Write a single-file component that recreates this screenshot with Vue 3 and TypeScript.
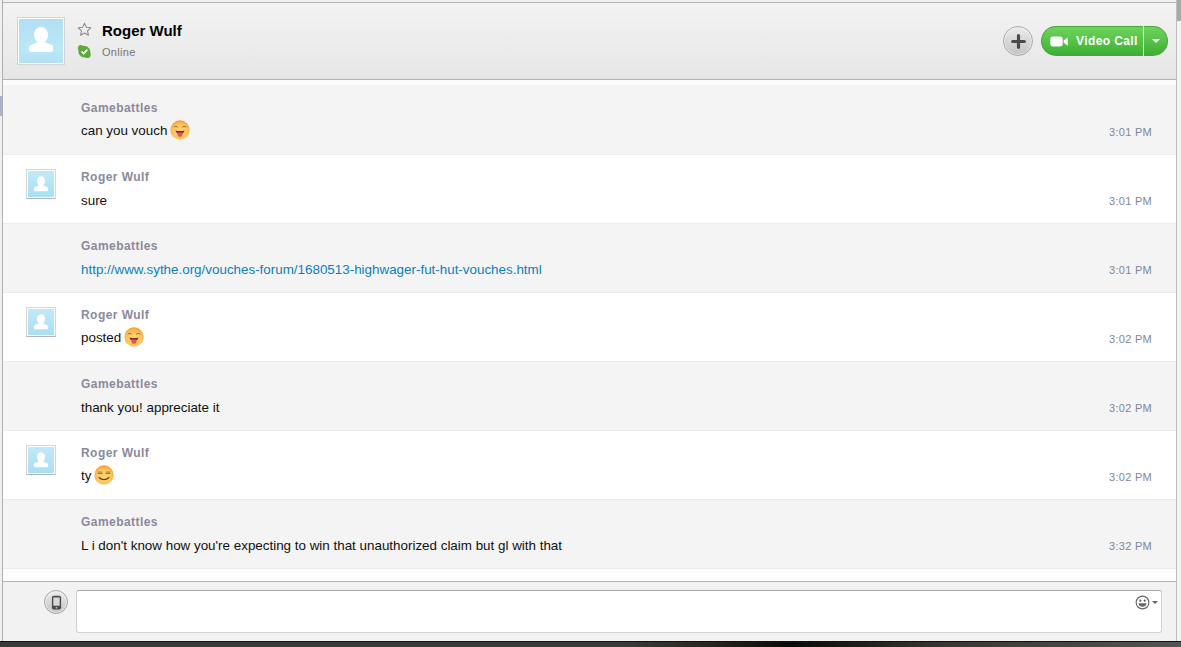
<script setup lang="ts">
interface Row {
  id: number
  name: string
  text: string
  time: string
  self: boolean
  link?: boolean
  emoji?: 'tongue' | 'smile'
}
const rows: Row[] = [
  { id: 1, name: 'Gamebattles', text: 'can you vouch', time: '3:01 PM', self: false, emoji: 'tongue' },
  { id: 2, name: 'Roger Wulf', text: 'sure', time: '3:01 PM', self: true },
  { id: 3, name: 'Gamebattles', text: 'http://www.sythe.org/vouches-forum/1680513-highwager-fut-hut-vouches.html', time: '3:01 PM', self: false, link: true },
  { id: 4, name: 'Roger Wulf', text: 'posted', time: '3:02 PM', self: true, emoji: 'tongue' },
  { id: 5, name: 'Gamebattles', text: 'thank you! appreciate it', time: '3:02 PM', self: false },
  { id: 6, name: 'Roger Wulf', text: 'ty', time: '3:02 PM', self: true, emoji: 'smile' },
  { id: 7, name: 'Gamebattles', text: "L i don't know how you're expecting to win that unauthorized claim but gl with that", time: '3:32 PM', self: false }
]
</script>

<template>
  <div class="screen">
    <div class="upper">
      <div class="side-left"><div class="tab"></div></div>
      <main class="win">
        <header class="head">
          <div class="big-avatar">
            <svg viewBox="0 0 44 44" width="44" height="44"><ellipse cx="22" cy="16" rx="7" ry="8" fill="#fff"/><path d="M18.500 22.500h7c1 2 6.500 2.500 8.500 4.500.5 1.500.5 4-.3 5.300-.2.400-.6.700-1.200.7H12c-.6 0-1-.3-1.200-.7-.8-1.300-.8-3.800-.3-5.300 2-2 7-2.500 8-4.500z" fill="#fff"/></svg>
          </div>
          <div class="state-icons">
            <svg viewBox="0 0 16 16" width="15" height="15"><path d="M8 1.300l2 4.400 4.700.5-3.500 3.200 1 4.700L8 11.700l-4.200 2.400 1-4.700L1.300 6.200 6 5.700z" fill="none" stroke="#8a8a8a" stroke-width="1.100" stroke-linejoin="round"/></svg>
            <svg viewBox="0 0 16 16" width="15" height="15"><path d="M3.800 1c1 0 1.700.5 2.400.8C10.800 1.400 14.400 4.700 14.200 8.500c0 .7 0 1 .3 1.500.7 2.400-.8 5-3.700 5-1 0-1.700-.4-2.500-.6C4 14.400 1.200 11 1.500 7.200c0-.6-.5-1.200-.5-2.600C1 2.500 2.100 1 3.800 1z" fill="#5fa83b"/><path d="M4.800 8l2.300 2.200L11 6" fill="none" stroke="#fff" stroke-width="1.800"/></svg>
          </div>
          <div class="who">
            <div class="who-name">Roger Wulf</div>
            <div class="who-status">Online</div>
          </div>
          <div class="spacer"></div>
          <button class="round plus" aria-label="Add">
            <svg viewBox="0 0 16 16" width="15" height="15"><path d="M8 1.800v12.400M1.800 8h12.400" stroke="#4a4a4a" stroke-width="3.400" stroke-linecap="round"/></svg>
          </button>
          <div class="call">
            <button class="call-main">
              <svg viewBox="0 0 20 12" width="19" height="11"><rect x="0" y="0.500" width="13.500" height="11" rx="3" fill="#fff"/><path d="M14.500 5l4.500-3.500v9L14.500 7z" fill="#fff"/></svg>
              <span>Video Call</span>
            </button>
            <button class="call-more" aria-label="More"><i></i></button>
          </div>
        </header>

        <section class="log">
          <article v-for="r in rows" :key="r.id" class="row" :class="{ odd: !r.self }">
            <div class="row-av">
              <div v-if="r.self" class="small-avatar">
                <svg viewBox="0 0 26 26" width="26" height="26"><ellipse cx="13" cy="10" rx="4" ry="4.800" fill="#fff"/><path d="M11 14h4c.6 1.200 3.800 1.500 5 2.700.3.900.3 2.400-.2 3.100-.1.200-.3.400-.7.400H6.900c-.4 0-.6-.2-.7-.4-.5-.7-.5-2.200-.2-3.100 1.200-1.200 4.400-1.500 5-2.700z" fill="#fff"/></svg>
              </div>
            </div>
            <div class="row-body">
              <div class="row-name">{{ r.name }}</div>
              <div class="row-text" :class="{ 'with-emoji': r.emoji }">
                <a v-if="r.link" class="link">{{ r.text }}</a>
                <span v-else>{{ r.text }}</span>
                <svg v-if="r.emoji" class="emoji" viewBox="0 0 20 20" width="20" height="20">
                  <defs>
                    <radialGradient :id="'g' + r.id" cx="50%" cy="60%" r="60%">
                      <stop offset="0" stop-color="#ffd77c"/>
                      <stop offset="0.700" stop-color="#fdc05a"/>
                      <stop offset="1" stop-color="#f59a30"/>
                    </radialGradient>
                  </defs>
                  <circle cx="10" cy="10" r="9.700" :fill="'url(#g' + r.id + ')'"/>
                  <template v-if="r.emoji === 'tongue'">
                    <path d="M3.800 7.300c1-1.200 2.800-1.200 3.800 0M12.400 7.300c1-1.200 2.800-1.200 3.800 0" fill="none" stroke="#7a5424" stroke-width=".9"/>
                    <path d="M5.500 10.500c3 .8 6 .8 9 0-.3 1.600-1.300 2.700-2.500 3.100h-4C6.800 13.200 5.800 12.100 5.500 10.500z" fill="#7a2e22"/>
                    <path d="M7.400 12.500h5.200l-.3 3c-.4 1.700-4.200 1.700-4.600 0z" fill="#e8505c"/>
                  </template>
                  <template v-else>
                    <path d="M3.800 8.200h4.500M11.700 8.200h4.500" stroke="#7a5424" stroke-width="1"/>
                    <path d="M3.800 6.800h4.400M11.800 6.800h4.400" stroke="#b08440" stroke-width=".6"/>
                    <path d="M5 12.500c3 2.600 7 2.600 10 0" fill="none" stroke="#5e3f17" stroke-width="1.100" stroke-linecap="round"/>
                  </template>
                </svg>
              </div>
            </div>
            <time class="row-time">{{ r.time }}</time>
          </article>
        </section>

        <footer class="foot">
          <button class="round phone" aria-label="Phone">
            <svg viewBox="0 0 12 16" width="11" height="15"><rect x="1" y="0.500" width="10" height="15" rx="2" fill="#4a4a4a"/><rect x="2.500" y="2.500" width="7" height="9" fill="#d8d8d8"/><circle cx="6" cy="13.500" r="1" fill="#bbb"/></svg>
          </button>
          <div class="input">
            <div class="input-emoji">
              <svg viewBox="0 0 16 16" width="15" height="15"><circle cx="8" cy="8" r="6.800" fill="none" stroke="#666" stroke-width="1.200"/><circle cx="5.700" cy="6" r="1.100" fill="#555"/><circle cx="10.300" cy="6" r="1.100" fill="#555"/><path d="M3.700 8.800h8.600c-.3 2.500-2 3.800-4.300 3.800S4 11.300 3.700 8.800z" fill="#666"/></svg>
              <i></i>
            </div>
          </div>
        </footer>
      </main>
      <div class="side-right"><div class="corner"></div></div>
    </div>
    <div class="desk"></div>
  </div>
</template>

<style scoped>
.screen {
  width: 1181px;
  height: 647px;
  display: flex;
  flex-direction: column;
  overflow: hidden;
  font-family: "Liberation Sans", Arial, sans-serif;
  background: #f0f0f0;
}
.upper { flex: 1; display: flex; min-height: 0; padding-top: 2px; }
.side-left { width: 3px; margin-top: -2px; box-sizing: border-box; background: #f0f0f0; border-right: 1px solid #b0b0b0; position: relative; }
.tab { position: absolute; left: 0; top: 96px; width: 2px; height: 20px; background: #a9b3cc; }
.side-right { width: 5px; margin-top: -2px; box-sizing: border-box; background: #f4f4f4; border-left: 1px solid #bdbdbd; }
.corner { height: 21px; background: #a8a8a8; }
.win { flex: 1; min-width: 0; display: flex; flex-direction: column; background: #fff; border-top: 1px solid #b4b4b4; }

.head {
  height: 77px;
  box-sizing: border-box;
  flex: none;
  display: flex;
  align-items: flex-start;
  background: linear-gradient(#f3f3f3, #e6e6e6);
  border-bottom: 1px solid #b5b5b5;
}
.big-avatar {
  margin: 14px 0 0 14px;
  width: 46px;
  height: 46px;
  box-sizing: content-box;
  border: 1px solid #d4d4d4;
  outline: 1px solid #fff;
  outline-offset: -2px;
  background: linear-gradient(#b0e0f3, #bce7f6 70%, #aee0f3);
  display: flex;
  align-items: center;
  justify-content: center;
}
.state-icons { margin: 19px 0 0 12px; display: flex; flex-direction: column; gap: 7px; width: 25px; }
.who { margin-top: 19px; }
.who-name { font-size: 15px; font-weight: 700; line-height: 18px; color: #000; }
.who-status { font-size: 11px; line-height: 14px; margin-top: 5px; color: #777; letter-spacing: .3px; }
.spacer { flex: 1; }
.round {
  border-radius: 50%;
  border: 1px solid #a9a9a9;
  background: linear-gradient(#ececec, #c4c4c4);
  padding: 0;
  display: flex;
  align-items: center;
  justify-content: center;
  box-shadow: inset 0 0 0 1px rgba(255,255,255,.5);
}
.plus { width: 30px; height: 30px; margin: 23px 8px 0 0; }
.call { margin: 23px 8px 0 0; display: flex; height: 30px; }
.call button { border: 1px solid #4aa53a; background: linear-gradient(#6fd35c, #3cb033); color: #fff; padding: 0; height: 30px; display: flex; align-items: center; }
.call-main {
  width: 102px;
  border-radius: 15px 0 0 15px;
  padding-left: 8px !important;
  gap: 7px;
  font: 700 12px "Liberation Sans", Arial, sans-serif;
  border-right: none !important;
}
.call-main span { letter-spacing: .4px; }
.call-more { width: 24px; margin-left: 1px; border-radius: 0 15px 15px 0; justify-content: center; border-left: none !important; }
.call-more i { width: 0; height: 0; border: 4px solid transparent; border-top: 4px solid #fff; border-bottom: 0; }

.log { flex: 1; min-height: 0; padding-top: 5px; background: #fcfcfc; }
.row {
  height: 69px;
  box-sizing: border-box;
  display: flex;
  background: #fff;
  border-bottom: 1px solid #ececec;
}
.row:first-child { height: 70px; padding-top: 1px; }
.row.odd { background: #f4f4f4; }
.row-av { width: 78px; flex: none; padding: 14px 0 0 23px; box-sizing: border-box; }
.small-avatar {
  width: 28px;
  height: 28px;
  border: 1px solid #d6d6d6;
  border-bottom-color: #a8b6bd;
  outline: 1px solid #fff;
  outline-offset: -2px;
  background: linear-gradient(#c4e9f7, #a8def3);
  display: flex;
  align-items: center;
  justify-content: center;
}
.row-body { flex: 1; min-width: 0; }
.row-name { margin-top: 15px; font-size: 12px; font-weight: 700; line-height: 15px; color: #8a8a9c; letter-spacing: .45px; }
.row-text { margin-top: 5px; height: 20px; display: flex; align-items: center; font-size: 13.400px; color: #111; }
.row-text.with-emoji { margin-top: 4px; }
.link { color: #0a7fc2; }
.emoji { margin-left: 3px; flex: none; }
.row-time { width: 67px; flex: none; padding: 39px 0 0 0; font-size: 11px; line-height: 14px; color: #7f8798; letter-spacing: .3px; box-sizing: border-box; }

.foot {
  height: 60px;
  flex: none;
  box-sizing: border-box;
  background: #f2f2f2;
  border-top: 1px solid #b5b5b5;
  display: flex;
  align-items: flex-start;
}
.phone { width: 24px; height: 24px; margin: 8px 0 0 41px; flex: none; }
.input {
  margin: 8px 14px 0 8px;
  flex: 1;
  height: 43px;
  box-sizing: border-box;
  background: #fff;
  border: 1px solid #d2d2d2;
  border-top-color: #a8a8a8;
  border-radius: 3px;
  position: relative;
}
.input-emoji { position: absolute; right: 3px; top: 4px; display: flex; align-items: center; gap: 2px; }
.input-emoji i { width: 0; height: 0; border: 3px solid transparent; border-top: 3px solid #666; border-bottom: 0; }

.desk { height: 6px; flex: none; background: linear-gradient(90deg, #3a3a3a 0, #3a3a3a 53%, #2a2520 60%, #0a0a0a 67%, #3a3632 80%, #555 100%); border-top: 1px solid #111; box-sizing: border-box; }
</style>

<style>
html, body { margin: 0; background: #fff; }
</style>
